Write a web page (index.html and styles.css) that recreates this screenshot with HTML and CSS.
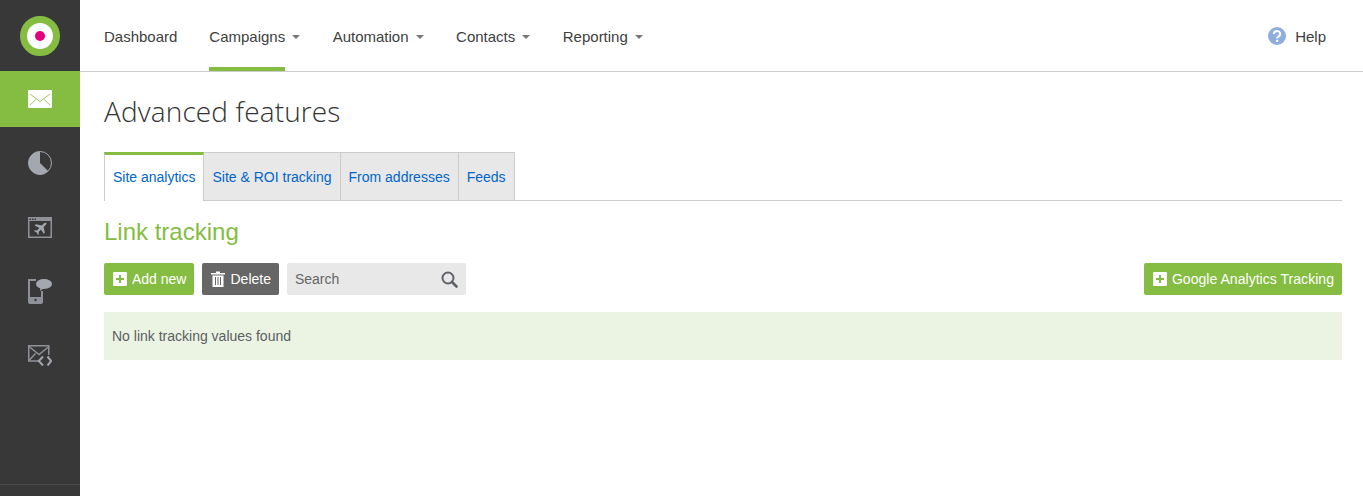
FILE: index.html
```html
<!DOCTYPE html>
<html lang="en">
<head>
    <meta charset="UTF-8">
    <title>Advanced features</title>
    <link rel="stylesheet" href="styles.css">
</head>
<body>
    <!-- Sidebar -->
    <aside class="sidebar">
        <div class="logo"><span class="logo-ring"><span class="logo-dot"></span></span></div>
        <a class="side-item active">
            <svg width="24" height="18" viewBox="0 0 24 18"><rect width="24" height="18" rx="1" fill="#fff"/><path d="M2 4l10 7.500 10-7.500M2 15l6-5.500M22 15l-6-5.500" fill="none" stroke="#9cca66" stroke-width="1"/></svg>
        </a>
        <a class="side-item">
            <svg width="24" height="24" viewBox="0 0 24 24"><circle cx="12" cy="12" r="11.500" fill="none" stroke="#a3a8b0" stroke-width="1"/><path d="M12 12V0.500A11.500 11.500 0 1 0 20.100 20.100Z" fill="#a3a8b0"/></svg>
        </a>
        <a class="side-item">
            <svg width="24" height="21" viewBox="0 0 24 21"><path d="M0 0h24v21H0zM1.500 4v15.500h21V4z" fill="#8e9298" fill-rule="evenodd"/><path d="M1.500 1.500h1.500v1.500h-1.500zM4 1.500h1.500v1.500H4zM6.500 1.500h1.500v1.500H6.500z" fill="#383838"/><path d="M18.500 6c-1-.5-2.200 0-3 .8l-1.700 1.700-6-1.200-1.100 1.100 4.700 2.700-2.400 2.400-2.200-.3-.9.9 2.800 1.300 1.300 2.600.9-.9-.3-2.200 2.400-2.400 2.700 4.300 1.100-1.100-1.200-5.700 1.700-1.700c.8-.8 1.400-2 1.200-2.800z" fill="#a3a8b0"/></svg>
        </a>
        <a class="side-item">
            <svg width="24" height="25" viewBox="0 0 24 25"><path d="M8 1H1v22q0 1 1 1h11q1 0 1-1V12" fill="none" stroke="#8e9298" stroke-width="2"/><rect x="1" y="18" width="13" height="6" fill="#8e9298"/><circle cx="7.500" cy="21" r="1.200" fill="#383838"/><ellipse cx="16" cy="5" rx="8" ry="5" fill="#a3a8b0"/><path d="M12.500 8l-0.500 4 4-3z" fill="#a3a8b0"/></svg>
        </a>
        <a class="side-item">
            <svg width="24" height="21" viewBox="0 0 24 21"><path d="M10 16H.75V.75h20V10" fill="none" stroke="#8e9298" stroke-width="1.500"/><path d="M1 1.500l10 8 10-8M1 15.500l6.500-7" fill="none" stroke="#8e9298" stroke-width="1.500"/><path d="M15 11.500l-4.200 4.500 4.200 4.500M19.500 11.500l3.700 4.500-3.700 4.500" fill="none" stroke="#a3a8b0" stroke-width="2"/></svg>
        </a>
        <div class="side-foot"></div>
    </aside>

    <div class="main">
        <!-- Top nav -->
        <header class="topbar">
            <nav class="nav">
                <a class="nav-link"><span class="nav-label">Dashboard</span></a>
                <a class="nav-link current"><span class="nav-label">Campaigns</span><i class="caret"></i></a>
                <a class="nav-link"><span class="nav-label">Automation</span><i class="caret"></i></a>
                <a class="nav-link"><span class="nav-label">Contacts</span><i class="caret"></i></a>
                <a class="nav-link"><span class="nav-label">Reporting</span><i class="caret"></i></a>
            </nav>
            <a class="help">
                <svg width="18" height="18" viewBox="0 0 18 18"><circle cx="9" cy="9" r="9" fill="#8fadde"/><path d="M5.900 7a3.100 2.900 0 1 1 4.600 2.500c-1 .6-1.400 1-1.400 2" fill="none" stroke="#fff" stroke-width="2.100"/><rect x="8" y="12.800" width="2.200" height="2.200" fill="#fff"/></svg>
                Help
            </a>
        </header>

        <div class="content">
            <h1 class="page-title">Advanced features</h1>

            <ul class="tabs">
                <li class="tab active">Site analytics</li>
                <li class="tab">Site &amp; ROI tracking</li>
                <li class="tab">From addresses</li>
                <li class="tab">Feeds</li>
            </ul>

            <h2 class="section-title">Link tracking</h2>

            <div class="actions">
                <button class="btn btn-green"><span class="plus"></span>Add new</button>
                <button class="btn btn-grey">
                    <svg width="14" height="16" viewBox="0 0 14 16"><path d="M0 2h5V.5h4V2h5v1.500H0z" fill="#fff"/><path d="M1.500 4.500h11V16h-11zM4 6v8h1V6zM6.500 6v8h1V6zM9 6v8h1V6z" fill="#fff" fill-rule="evenodd"/></svg>
                    Delete
                </button>
                <div class="search">
                    <span>Search</span>
                    <svg width="17" height="17" viewBox="0 0 17 17"><circle cx="7" cy="7" r="5.500" fill="none" stroke="#5f6368" stroke-width="2"/><path d="M11 11l4.500 4.500" stroke="#5f6368" stroke-width="2.600" stroke-linecap="round"/></svg>
                </div>
                <button class="btn btn-green btn-wide"><span class="plus"></span>Google Analytics Tracking</button>
            </div>

            <div class="notice">No link tracking values found</div>
        </div>
    </div>
</body>
</html>
```

FILE: styles.css
```css
html, body {
    height: 100%;
}
body {
    margin: 0;
    display: flex;
    background-color: #fff;
    color: #404040;
    font-family: "Liberation Sans", Arial, sans-serif;
    font-size: 14px;
    overflow: hidden;
}
.sidebar {
    width: 80px;
    flex-shrink: 0;
    height: 496px;
    background-color: #383838;
    display: flex;
    flex-direction: column;
}
.logo {
    height: 71px;
    display: flex;
    align-items: center;
    justify-content: center;
}
.logo-ring {
    width: 26px;
    height: 26px;
    border: 7px solid #84bd41;
    border-radius: 50%;
    background-color: #fff;
    display: flex;
    align-items: center;
    justify-content: center;
}
.logo-dot {
    width: 10px;
    height: 10px;
    border-radius: 50%;
    background-color: #e6007e;
}
.side-item {
    height: 56px;
    margin-bottom: 8px;
    display: flex;
    align-items: center;
    justify-content: center;
}
.side-item.active {
    background-color: #84bd41;
}
.side-foot {
    margin-top: auto;
    height: 11px;
    border-top: 1px solid #4c4c4c;
}
.main {
    flex: 1;
    min-width: 0;
}
.topbar {
    height: 71px;
    border-bottom: 1px solid #ccc;
    display: flex;
    justify-content: space-between;
    padding: 0 37px 0 24px;
}
.nav {
    display: flex;
    gap: 32.500px;
}
.nav-link {
    display: flex;
    font-size: 15px;
    line-height: 17px;
    color: #404040;
}
.nav-link:first-child {
    margin-right: -.6px;
}
.nav-label {
    height: 71px;
    box-sizing: border-box;
    padding-top: 28px;
}
.current .nav-label {
    border-bottom: 4px solid #84bd41;
}
.caret {
    margin: 35px 0 0 7px;
    width: 0;
    height: 0;
    border-top: 4px solid #777;
    border-left: 4px solid transparent;
    border-right: 4px solid transparent;
}
.help {
    display: flex;
    align-items: center;
    gap: 9px;
    padding-top: 1px;
    font-size: 15px;
    color: #404040;
}
.content {
    padding: 0 21px 0 24px;
}
.page-title {
    margin: 0;
    padding-top: 20px;
    height: 38px;
    font-family: "Open Sans", sans-serif;
    font-size: 28px;
    font-weight: 300;
    letter-spacing: .14px;
    line-height: 38px;
    color: #333;
}
.tabs {
    list-style: none;
    margin: 22px 0 0;
    padding: 0;
    display: flex;
    height: 48px;
    border-bottom: 1px solid #ccc;
}
.tab {
    height: 49px;
    box-sizing: border-box;
    padding: 0 8px;
    line-height: 48px;
    color: #0066cc;
    background-color: #e8e8e8;
    border: 1px solid #ccc;
    border-left: 0;
}
.tab.active {
    line-height: 44px;
    background-color: #fff;
    border-top: 3px solid #84bd41;
    border-left: 1px solid #ccc;
    border-bottom: 0;
}
.section-title {
    margin: 17px 0 0;
    font-size: 24px;
    font-weight: normal;
    line-height: 28px;
    color: #84bd41;
}
.actions {
    margin-top: 17px;
    display: flex;
    gap: 8px;
}
.btn {
    height: 32px;
    padding: 0 8px 0 9px;
    border: 0;
    border-radius: 2px;
    display: flex;
    align-items: center;
    gap: 5px;
    color: #fff;
    font-family: inherit;
    font-size: 14px;
}
.btn-green {
    background-color: #84bd41;
}
.btn-grey {
    background-color: #666;
}
.btn-wide {
    margin-left: auto;
    letter-spacing: .04px;
}
.plus {
    width: 14px;
    height: 14px;
    background-color: #fff;
    border-radius: 1px;
    background-image: linear-gradient(#84bd41, #84bd41), linear-gradient(#84bd41, #84bd41);
    background-size: 8px 2px, 2px 8px;
    background-position: center;
    background-repeat: no-repeat;
}
.search {
    width: 179px;
    height: 32px;
    box-sizing: border-box;
    padding: 0 8px;
    background-color: #e8e8e8;
    border-radius: 2px;
    display: flex;
    align-items: center;
    justify-content: space-between;
    color: #666;
}
.notice {
    margin-top: 17px;
    height: 48px;
    line-height: 48px;
    padding-left: 8px;
    background-color: #ebf4e2;
    color: #5a5f66;
}
```
